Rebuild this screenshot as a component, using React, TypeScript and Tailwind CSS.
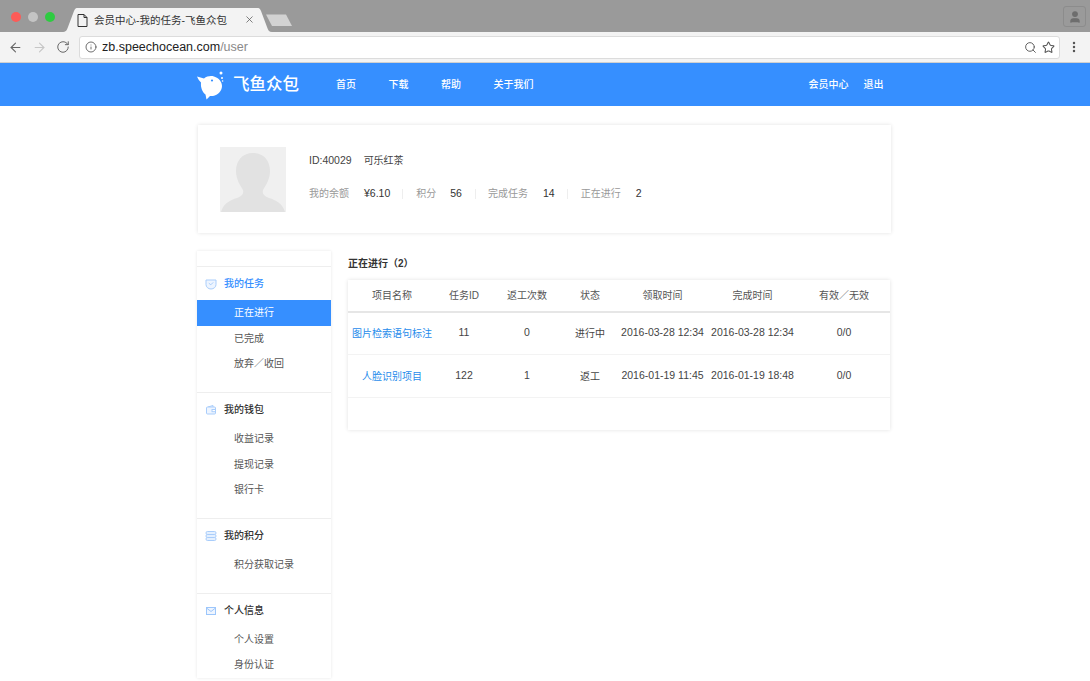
import React from "react";
import { ArrowLeft, ArrowRight, RotateCw, Info, Search, Star, MoreVertical, X, User } from "lucide-react";

function Bird() {
  return (
    <svg width="30" height="32" viewBox="0 0 30 32" className="shrink-0">
      <path d="M2 7.500 L9 9.500 C12 7 16 6.500 19 7.500 C24 9 27 13 27 17 C27 22 23 26 18 27 L15 27 L11.500 30.500 L10.500 25.500 C7 23 5.500 18 6 13.500 C4.500 12 3 10 2 7.500 Z" fill="#fff" />
      <circle cx="17" cy="11.500" r="1.100" fill="#368fff" />
      <circle cx="26" cy="4" r="1.500" fill="#fff" />
      <circle cx="27" cy="9" r="1" fill="#fff" />
      <circle cx="27.600" cy="12" r="0.800" fill="#fff" />
    </svg>
  );
}

function TaskIcon() {
  return (
    <svg width="12" height="12" viewBox="0 0 12 12" fill="none" stroke="#a9cdfb" strokeWidth="1">
      <path d="M1 2h10v4.500a5 4.500 0 0 1-10 0z" fill="#eef5ff" />
      <path d="M3.800 5.200l2 1.600 2.400-2.400" />
    </svg>
  );
}
function WalletIcon() {
  return (
    <svg width="12" height="12" viewBox="0 0 12 12" fill="none" stroke="#a9cdfb" strokeWidth="1">
      <path d="M3 3l5-1.500V3" />
      <rect x="1.500" y="3" width="9" height="7" rx="1" fill="#eef5ff" />
      <rect x="7" y="5.500" width="3.500" height="2.200" fill="#fff" />
    </svg>
  );
}
function StackIcon() {
  return (
    <svg width="12" height="12" viewBox="0 0 12 12" fill="#e4f0ff" stroke="#a9cdfb" strokeWidth="1">
      <rect x="1" y="1.500" width="10" height="3" rx="1.400" />
      <rect x="1" y="4.500" width="10" height="3" rx="1.400" />
      <rect x="1" y="7.500" width="10" height="3" rx="1.400" />
    </svg>
  );
}
function MailIcon() {
  return (
    <svg width="12" height="12" viewBox="0 0 12 12" fill="none" stroke="#9cc6fb" strokeWidth="1">
      <rect x="1.500" y="2.500" width="9" height="7" fill="#eef5ff" />
      <path d="M1.500 3l4.500 3.500L10.500 3" />
    </svg>
  );
}

function Avatar() {
  return (
    <svg width="66" height="65" viewBox="0 0 66 65" className="shrink-0">
      <rect width="66" height="65" fill="#f0f0f0" />
      <path d="M33 6 C44 6 50 14 50 24 C50 32 46 38 43 43 C42 47 44 49 49 51 C56 53 63 57 65 65 L1 65 C3 57 10 53 17 51 C22 49 24 47 23 43 C20 38 16 32 16 24 C16 14 22 6 33 6 Z" fill="#e2e2e2" />
    </svg>
  );
}

type Group = { icon: React.ReactNode; title: string; active?: boolean; items: string[]; h: string; rowH: string };
const groups: Group[] = [
  { icon: <TaskIcon />, title: "我的任务", active: true, items: ["正在进行", "已完成", "放弃／收回"], h: "h-[125px]", rowH: "h-[25.500px]" },
  { icon: <WalletIcon />, title: "我的钱包", items: ["收益记录", "提现记录", "银行卡"], h: "h-[125px]", rowH: "h-[25.500px]" },
  { icon: <StackIcon />, title: "我的积分", items: ["积分获取记录"], h: "h-[74px]", rowH: "h-[25.500px]" },
  { icon: <MailIcon />, title: "个人信息", items: ["个人设置", "身份认证"], h: "h-[84px]", rowH: "h-[25px]" },
];

const cols = "grid grid-cols-[88px_56px_70px_56px_89px_91px_92px] items-center text-center";

const rows = [
  { h: "h-[42px] pb-px", c: ["图片检索语句标注", "11", "0", "进行中", "2016-03-28 12:34", "2016-03-28 12:34", "0/0"] },
  { h: "h-[43px]", c: ["人脸识别项目", "122", "1", "返工", "2016-01-19 11:45", "2016-01-19 18:48", "0/0"] },
];

export default function App() {
  return (
    <div className="w-[1090px] h-[681px] overflow-hidden bg-white text-[10.5px] text-[#444] font-['Liberation_Sans','Noto_Sans_CJK_SC',sans-serif]">
      {/* browser tab strip */}
      <div className="relative h-8 bg-[#9a9a9a]">
        <div className="absolute left-[11px] top-[12px] flex gap-[7px]">
          <span className="w-[10px] h-[10px] rounded-full bg-[#fc5b57]" />
          <span className="w-[10px] h-[10px] rounded-full bg-[#c4c4c4]" />
          <span className="w-[10px] h-[10px] rounded-full bg-[#2ecb41]" />
        </div>
        <svg className="absolute left-[60px] top-[7px]" width="240" height="25" viewBox="0 0 240 25">
          <path d="M2 25 C6 25 7 23 8 20 L14 4 C15 1.500 16 1 18 1 L197 1 C199 1 200 1.500 201 4 L207 20 C208 23 209 25 212 25 Z" fill="#f3f3f3" />
          <path d="M206 7.500 L226 7.500 L232 19 L212 19 Z" fill="#d2d2d2" />
        </svg>
        <div className="absolute left-[77px] top-[13px] h-[14px] flex items-center">
          <svg width="11" height="13" viewBox="0 0 11 13" fill="none" stroke="#333" strokeWidth="1">
            <path d="M1 .5h6l3 3v9H1zM7 .5v3h3" />
          </svg>
        </div>
        <span className="absolute left-[94px] top-[13px] text-[10.5px] leading-[14px] text-[#333]">会员中心-我的任务-飞鱼众包</span>
        <X className="absolute left-[244px] top-[14px] text-[#555]" size={11} strokeWidth={1.6} />
        <div className="absolute left-[1063px] top-[6px] w-[23px] h-[21px] rounded-[3px] border border-[#8c8c8c] flex items-center justify-center">
          <User size={14} fill="#6e6e6e" stroke="#6e6e6e" />
        </div>
      </div>
      {/* toolbar */}
      <div className="h-[31px] bg-[#f3f3f3] border-b border-[#d0d0d0] flex items-center pl-[8px] pr-[9px]">
        <ArrowLeft size={15} className="text-[#666]" strokeWidth={1.7} />
        <ArrowRight size={15} className="text-[#c6c6c6] ml-[9px]" strokeWidth={1.7} />
        <RotateCw size={14} className="text-[#666] ml-[9px]" strokeWidth={1.7} />
        <div className="ml-[9px] w-[981px] h-[23px] bg-white border border-[#dcdcdc] rounded-[3px] flex items-center pl-[5px] pr-[4px]">
          <Info size={12} className="text-[#555]" strokeWidth={1.7} />
          <span className="ml-[5px] text-[12.5px] text-[#222] font-['Liberation_Sans',sans-serif]">zb.speechocean.com<span className="text-[#8a8a8a]">/user</span></span>
          <Search size={13} className="ml-auto text-[#555]" strokeWidth={1.7} />
          <Star size={13} className="ml-[5px] text-[#555]" strokeWidth={1.9} />
        </div>
        <MoreVertical size={14} className="ml-auto text-[#555]" strokeWidth={2.2} />
      </div>
      {/* site header */}
      <header className="h-[43px] bg-[#368fff] flex items-center text-white pl-[195px]">
        <Bird />
        <span className="ml-[8px] text-[16.5px] font-medium">飞鱼众包</span>
        <nav className="ml-[37px] flex gap-[32.500px] text-[10px] font-medium">
          <span>首页</span><span>下载</span><span>帮助</span><span>关于我们</span>
        </nav>
        <div className="ml-[275px] flex gap-[15px] text-[10px] font-medium">
          <span>会员中心</span><span>退出</span>
        </div>
      </header>
      {/* profile */}
      <section className="ml-[198px] mt-[19px] w-[693px] h-[108px] bg-white shadow-[0_0_4px_rgba(0,0,0,0.12)] flex pl-[22px] pt-[22px]">
        <Avatar />
        <div className="ml-[23px] pt-[7px]">
          <div className="flex text-[10.5px] leading-[13px] text-[#444] gap-[12px]">
            <span>ID:40029</span><span className="text-[10px]">可乐红茶</span>
          </div>
          <div className="mt-[20px] flex items-center text-[10px] leading-[13px] text-[#999]">
            <span>我的余额</span><span className="ml-[15px] text-[10.5px] text-[#333]">¥6.10</span>
            <span className="ml-[12px] mr-[13px] w-px h-[10px] bg-[#eee]" />
            <span>积分</span><span className="ml-[14px] text-[10.5px] text-[#333]">56</span>
            <span className="ml-[13px] mr-[12px] w-px h-[10px] bg-[#eee]" />
            <span>完成任务</span><span className="ml-[15px] text-[10.5px] text-[#333]">14</span>
            <span className="ml-[12px] mr-[13px] w-px h-[10px] bg-[#eee]" />
            <span>正在进行</span><span className="ml-[15px] text-[10.5px] text-[#333]">2</span>
          </div>
        </div>
      </section>
      {/* body */}
      <div className="ml-[197px] mt-[18px] flex items-start">
        <aside className="w-[134px] flex flex-col gap-px bg-[#eeeeee] shadow-[0_0_3px_rgba(0,0,0,0.1)]">
          <div className="h-[15px] bg-white" />
          {groups.map((g) => (
            <div key={g.title} className={`${g.h} bg-white`}>
              <div className="h-[33px] flex items-center pl-[8px]">
                {g.icon}
                <span className={`ml-[7px] text-[10px] font-medium ${g.active ? "text-[#368fff]" : "text-[#333]"}`}>{g.title}</span>
              </div>
              <div>
                {g.items.map((it, i) => (
                  <div
                    key={it}
                    className={`${g.rowH} flex items-center pl-[37px] text-[10px] ${g.active && i === 0 ? "bg-[#368fff] text-white" : "text-[#555]"}`}
                  >
                    {it}
                  </div>
                ))}
              </div>
            </div>
          ))}
        </aside>
        <main className="ml-[17px] w-[542px]">
          <h2 className="h-[29px] pt-[6px] text-[10px] leading-[13px] font-bold text-[#333]">正在进行（2）</h2>
          <div className="shadow-[0_0_4px_rgba(0,0,0,0.12)] bg-white text-[10.5px] text-[#444]">
            <div className={`${cols} h-[33px] border-b-2 border-[#e6e6e6] text-[10px] text-[#555]`}>
              <span>项目名称</span><span>任务ID</span><span>返工次数</span><span>状态</span><span>领取时间</span><span>完成时间</span><span>有效／无效</span>
            </div>
            {rows.map((r) => (
              <div key={r.c[0]} className={`${cols} ${r.h} border-b border-[#f3f3f3]`}>
                {r.c.map((c, i) => (
                  <span key={i} className={i === 0 ? "text-[10px] text-[#1f8ceb]" : i === 3 ? "text-[10px]" : ""}>{c}</span>
                ))}
              </div>
            ))}
            <div className="h-[32px]" />
          </div>
        </main>
      </div>
    </div>
  );
}
